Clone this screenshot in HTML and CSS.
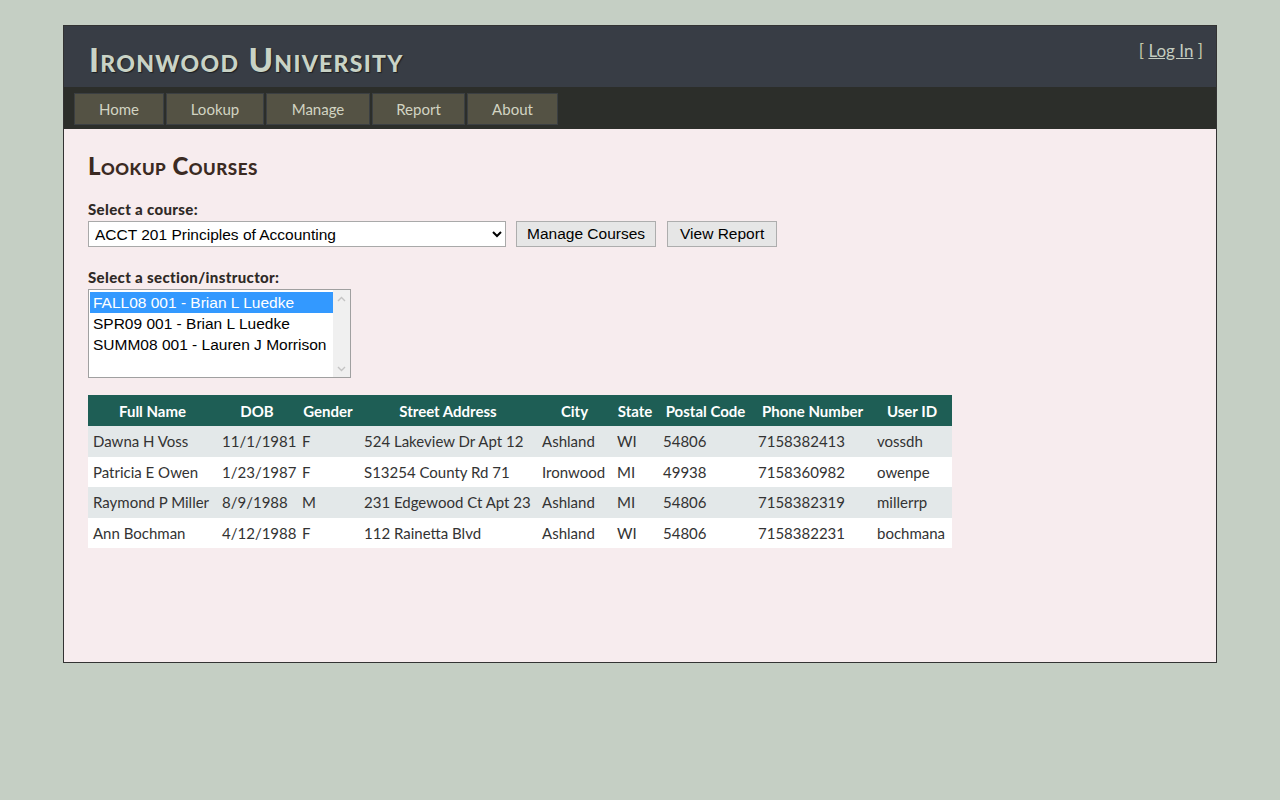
FILE: index.html
```html
<!DOCTYPE html>
<html lang="en">
<head>
<meta charset="utf-8">
<title>Lookup Courses - Ironwood University</title>
<link rel="stylesheet" href="styles.css">
</head>
<body>
<div class="page">
  <header class="masthead">
    <h1 class="brand">Ironwood University</h1>
    <div class="login">[ <a href="#">Log In</a> ]</div>
  </header>
  <nav class="nav">
    <a class="nav-item" href="#">Home</a>
    <a class="nav-item" href="#">Lookup</a>
    <a class="nav-item" href="#">Manage</a>
    <a class="nav-item" href="#">Report</a>
    <a class="nav-item" href="#">About</a>
  </nav>
  <main class="content">
    <h2 class="page-title">Lookup Courses</h2>
    <label class="field-label" for="course">Select a course:</label>
    <div class="course-row">
      <select id="course" class="course-select">
        <option>ACCT 201 Principles of Accounting</option>
      </select>
      <button class="btn" type="button">Manage Courses</button>
      <button class="btn" type="button">View Report</button>
    </div>
    <div class="field-label second">Select a section/instructor:</div>
    <div class="listbox">
      <ul class="listbox-items">
        <li class="opt selected">FALL08 001 - Brian L Luedke</li>
        <li class="opt">SPR09 001 - Brian L Luedke</li>
        <li class="opt">SUMM08 001 - Lauren J Morrison</li>
      </ul>
      <div class="scrollbar">
        <svg class="arrow" width="9" height="6" viewBox="0 0 9 6"><path d="M1 5 L4.5 1.5 L8 5" fill="none" stroke="#c4c4c4" stroke-width="1.4"/></svg>
        <svg class="arrow" width="9" height="6" viewBox="0 0 9 6"><path d="M1 1 L4.5 4.5 L8 1" fill="none" stroke="#c4c4c4" stroke-width="1.4"/></svg>
      </div>
    </div>
    <table class="roster">
      <colgroup>
        <col class="c-name"><col class="c-dob"><col class="c-gender"><col class="c-street"><col class="c-city"><col class="c-state"><col class="c-postal"><col class="c-phone"><col class="c-user">
      </colgroup>
      <thead>
        <tr><th>Full Name</th><th>DOB</th><th>Gender</th><th>Street Address</th><th>City</th><th>State</th><th>Postal Code</th><th>Phone Number</th><th>User ID</th></tr>
      </thead>
      <tbody>
        <tr><td>Dawna H Voss</td><td>11/1/1981</td><td>F</td><td>524 Lakeview Dr Apt 12</td><td>Ashland</td><td>WI</td><td>54806</td><td>7158382413</td><td>vossdh</td></tr>
        <tr><td>Patricia E Owen</td><td>1/23/1987</td><td>F</td><td>S13254 County Rd 71</td><td>Ironwood</td><td>MI</td><td>49938</td><td>7158360982</td><td>owenpe</td></tr>
        <tr><td>Raymond P Miller</td><td>8/9/1988</td><td>M</td><td>231 Edgewood Ct Apt 23</td><td>Ashland</td><td>MI</td><td>54806</td><td>7158382319</td><td>millerrp</td></tr>
        <tr><td>Ann Bochman</td><td>4/12/1988</td><td>F</td><td>112 Rainetta Blvd</td><td>Ashland</td><td>WI</td><td>54806</td><td>7158382231</td><td>bochmana</td></tr>
      </tbody>
    </table>
  </main>
</div>
</body>
</html>
```

FILE: styles.css
```css
* { box-sizing: border-box; }
html, body { margin: 0; padding: 0; }
body {
  background: #c5cfc4;
  font-family: "Lato", "Open Sans", sans-serif;
  color: #333;
  padding-top: 25px;
}
.page {
  width: 1154px;
  height: 638px;
  margin: 0 auto;
  border: 1px solid #333;
  background: #f7ecee;
  display: flex;
  flex-direction: column;
}
.masthead {
  background: #383d45;
  height: 61px;
  display: flex;
  justify-content: space-between;
  align-items: flex-start;
  padding: 0 13px 0 25px;
}
.brand {
  margin: 14px 0 0;
  font-size: 33px;
  font-weight: 900;
  font-variant: small-caps;
  letter-spacing: 1.3px;
  color: #c9d3c6;
  text-shadow: 1px 1px 1px #1c1f22;
  line-height: 38px;
}
.login {
  margin-top: 14px;
  font-size: 17px;
  color: #c5c9a8;
}
.login a { color: #c5cdc0; text-decoration: underline; }
.nav {
  background: #2c2e2a;
  height: 42px;
  display: flex;
  gap: 2px;
  padding: 6px 0 0 10px;
}
.nav-item {
  height: 32px;
  background: #545244;
  border: 1px solid #3b3f42;
  color: #d2d4c2;
  text-decoration: none;
  font-size: 15px;
  line-height: 30px;
  text-align: center;
}
.nav-item:nth-child(1) { width: 90px; }
.nav-item:nth-child(2) { width: 98px; }
.nav-item:nth-child(3) { width: 104px; }
.nav-item:nth-child(4) { width: 93px; }
.nav-item:nth-child(5) { width: 91px; }
.content {
  padding: 22px 24px 0;
  flex: 1;
}
.page-title {
  margin: 0 0 20px;
  font-size: 24px;
  font-weight: 900;
  font-variant: small-caps;
  letter-spacing: 0.5px;
  color: #3b2a22;
  line-height: 30px;
}
.field-label {
  display: block;
  font-size: 15px;
  font-weight: 900;
  letter-spacing: 0.35px;
  color: #2f2a26;
  line-height: 17px;
  margin-bottom: 3px;
}
.field-label.second { margin-top: 22px; }
.course-row {
  display: flex;
  gap: 10px;
  align-items: center;
}
.course-select {
  width: 418px;
  height: 26px;
  font-family: "Liberation Sans", Arial, sans-serif;
  font-size: 15.5px;
  color: #000;
  background: #fff;
  border: 1px solid #a9a9a9;
  padding: 0 2px;
}
.btn {
  height: 26px;
  font-family: "Liberation Sans", Arial, sans-serif;
  font-size: 15.5px;
  color: #000;
  background: #e6e6e6;
  border: 1px solid #adadad;
  padding: 0 10px;
}
.btn + .btn { margin-left: 1px; padding: 0 12px; }
.listbox {
  width: 263px;
  height: 89px;
  border: 1px solid #a0a0a0;
  background: #fff;
  display: flex;
  margin-bottom: 17px;
}
.listbox-items {
  list-style: none;
  margin: 0;
  padding: 2px 0 0 1px;
  flex: 1;
  min-width: 0;
  font-family: "Liberation Sans", Arial, sans-serif;
  font-size: 15.5px;
  color: #000;
  white-space: nowrap;
}
.opt {
  height: 21px;
  line-height: 21px;
  padding-left: 3px;
}
.opt.selected { background: #3399ff; color: #fff; }
.scrollbar {
  width: 17px;
  flex: none;
  background: #f0f0f0;
  display: flex;
  flex-direction: column;
  justify-content: space-between;
  align-items: center;
  padding: 6px 0 5px;
}
.arrow { display: block; }
.roster {
  border-collapse: collapse;
  table-layout: fixed;
  width: 864px;
  font-size: 15px;
  color: #333;
}
.c-name { width: 129px; }
.c-dob { width: 80px; }
.c-gender { width: 62px; }
.c-street { width: 178px; }
.c-city { width: 75px; }
.c-state { width: 46px; }
.c-postal { width: 95px; }
.c-phone { width: 119px; }
.c-user { width: 80px; }
.roster th {
  background: #1e5e55;
  color: #fff;
  font-weight: 700;
  height: 31px;
  padding: 0 2px;
  text-align: center;
  white-space: nowrap;
}
.roster td {
  height: 30.5px;
  padding: 0 3px 0 5px;
  white-space: nowrap;
  overflow: hidden;
}
.roster tbody tr:nth-child(odd) td { background: #e3e8e9; }
.roster tbody tr:nth-child(even) td { background: #fff; }
```
